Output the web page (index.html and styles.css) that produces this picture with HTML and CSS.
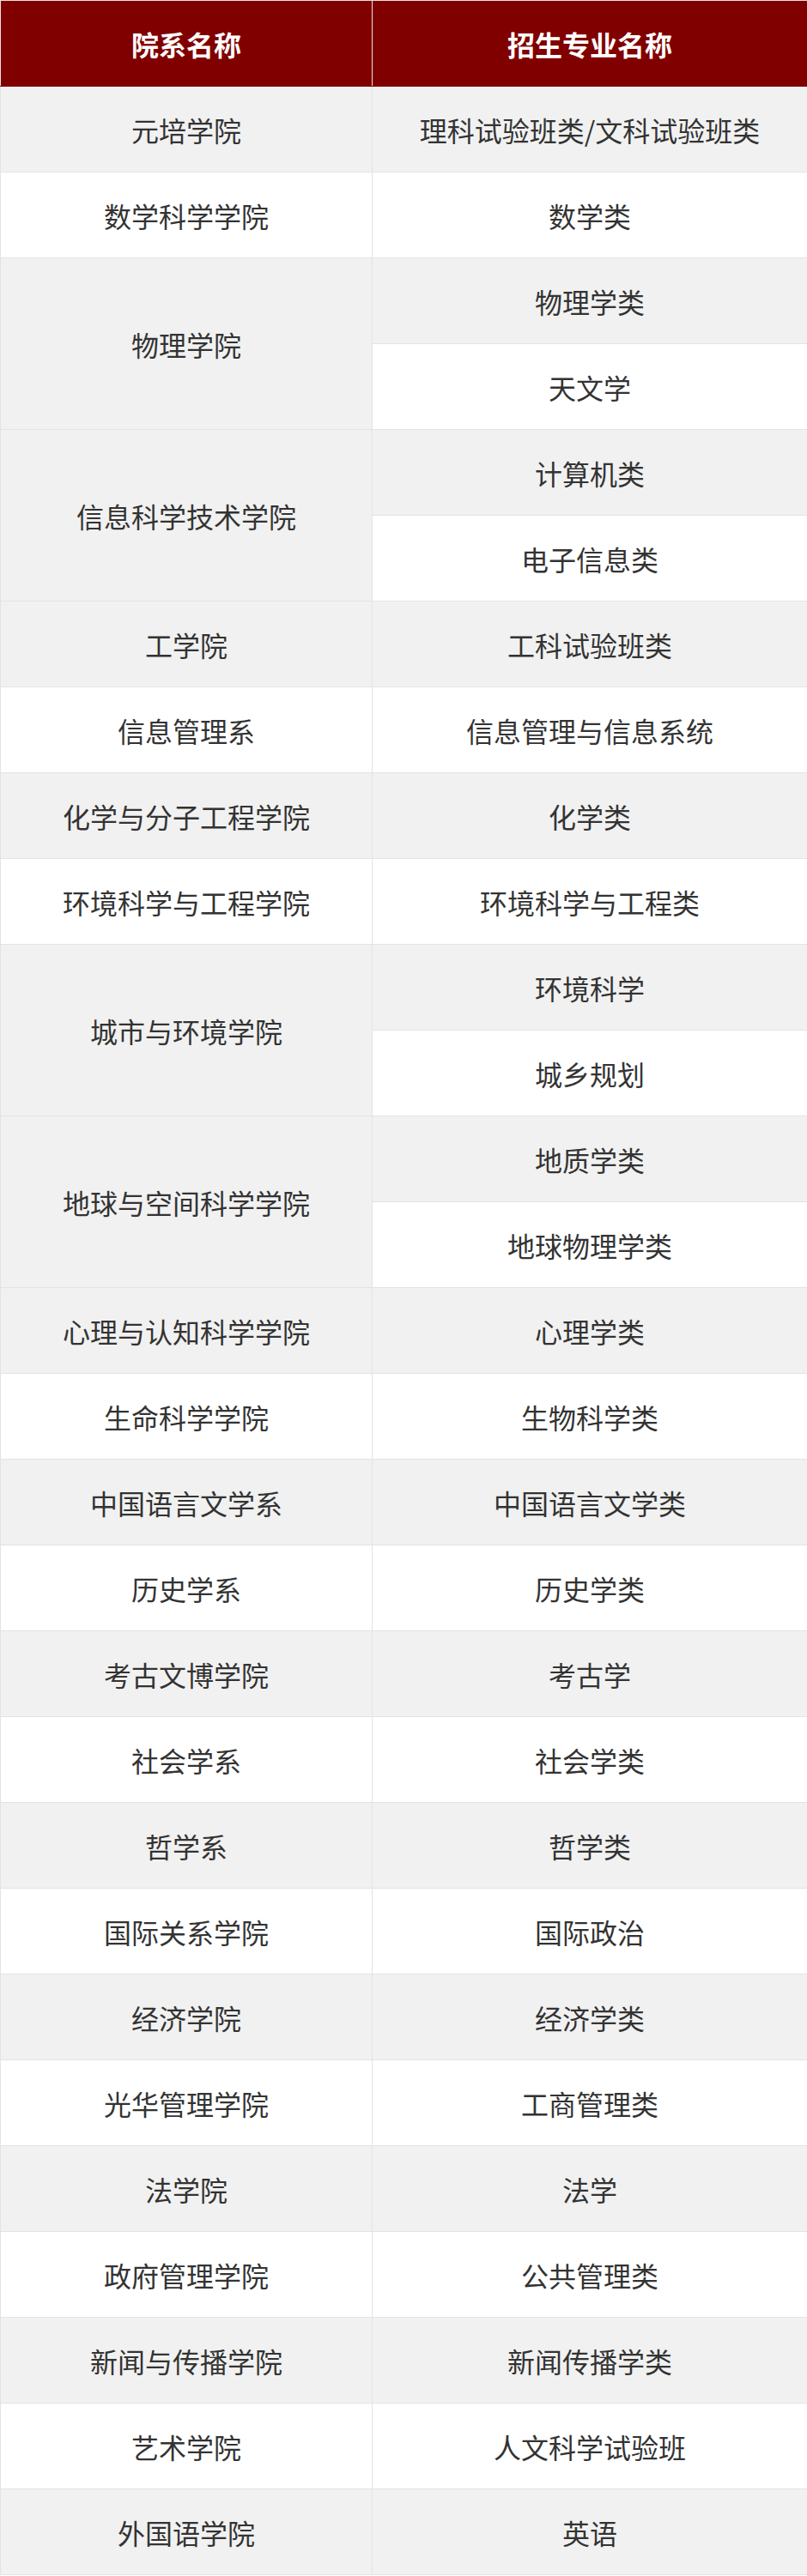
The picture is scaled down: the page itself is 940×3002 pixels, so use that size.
FILE: index.html
```html
<!DOCTYPE html>
<html lang="zh-CN">
<head>
<meta charset="utf-8">
<title>院系招生专业</title>
<link rel="stylesheet" href="styles.css">
</head>
<body>
<table class="majors">
  <colgroup><col class="col-dept"><col class="col-major"></colgroup>
  <thead>
    <tr><th>院系名称</th><th>招生专业名称</th></tr>
  </thead>
  <tbody>
    <tr><td>元培学院</td><td>理科试验班类/文科试验班类</td></tr>
    <tr><td>数学科学学院</td><td>数学类</td></tr>
    <tr><td rowspan="2">物理学院</td><td>物理学类</td></tr>
    <tr><td>天文学</td></tr>
    <tr><td rowspan="2">信息科学技术学院</td><td>计算机类</td></tr>
    <tr><td>电子信息类</td></tr>
    <tr><td>工学院</td><td>工科试验班类</td></tr>
    <tr><td>信息管理系</td><td>信息管理与信息系统</td></tr>
    <tr><td>化学与分子工程学院</td><td>化学类</td></tr>
    <tr><td>环境科学与工程学院</td><td>环境科学与工程类</td></tr>
    <tr><td rowspan="2">城市与环境学院</td><td>环境科学</td></tr>
    <tr><td>城乡规划</td></tr>
    <tr><td rowspan="2">地球与空间科学学院</td><td>地质学类</td></tr>
    <tr><td>地球物理学类</td></tr>
    <tr><td>心理与认知科学学院</td><td>心理学类</td></tr>
    <tr><td>生命科学学院</td><td>生物科学类</td></tr>
    <tr><td>中国语言文学系</td><td>中国语言文学类</td></tr>
    <tr><td>历史学系</td><td>历史学类</td></tr>
    <tr><td>考古文博学院</td><td>考古学</td></tr>
    <tr><td>社会学系</td><td>社会学类</td></tr>
    <tr><td>哲学系</td><td>哲学类</td></tr>
    <tr><td>国际关系学院</td><td>国际政治</td></tr>
    <tr><td>经济学院</td><td>经济学类</td></tr>
    <tr><td>光华管理学院</td><td>工商管理类</td></tr>
    <tr><td>法学院</td><td>法学</td></tr>
    <tr><td>政府管理学院</td><td>公共管理类</td></tr>
    <tr><td>新闻与传播学院</td><td>新闻传播学类</td></tr>
    <tr><td>艺术学院</td><td>人文科学试验班</td></tr>
    <tr><td>外国语学院</td><td>英语</td></tr>
  </tbody>
</table>
</body>
</html>
```

FILE: styles.css
```css
html, body {
  margin: 0;
  padding: 0;
  background: #ffffff;
}

body {
  font-family: "Noto Sans CJK SC", "Noto Sans", sans-serif;
  color: #333333;
}

.majors {
  width: 940px;
  border-collapse: collapse;
  border: 1px solid #e3e3e3;
  table-layout: fixed;
}

.col-dept { width: 433px; }
.col-major { width: 507px; }

.majors th,
.majors td {
  height: 99px;
  padding: 0;
  text-align: center;
  vertical-align: middle;
  font-size: 32px;
  line-height: 40px;
  border: 1px solid #e3e3e3;
}

.majors th {
  background: #800000;
  color: #ffffff;
  font-weight: bold;
  border-top-color: #e3e3e3;
  border-bottom-color: #800000;
}

.majors th + th {
  border-left: 1px solid #f4dede;
}

.majors tbody tr:nth-child(odd) {
  background: #f1f1f1;
}

.majors tbody tr:nth-child(even) {
  background: #ffffff;
}

.majors td {
  font-weight: normal;
}
```
